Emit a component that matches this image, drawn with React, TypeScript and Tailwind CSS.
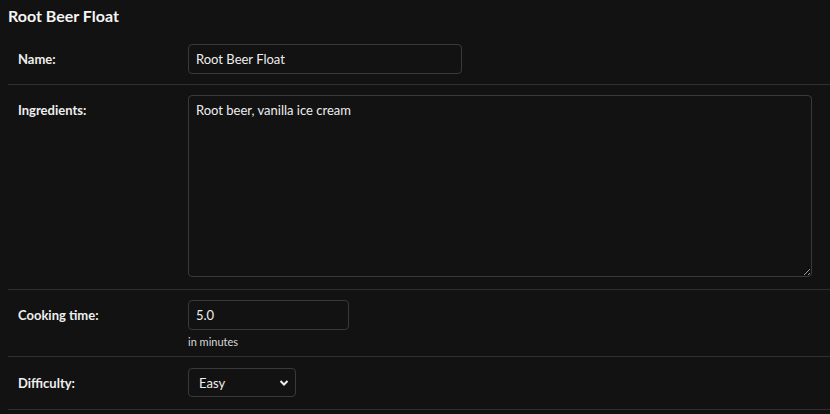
import React from 'react';

const font = { fontFamily: '"Segoe UI", Lato, "Noto Sans", sans-serif' };

export default function App() {
  return (
    <div className="min-h-[414px] w-[830px] bg-[#121212] text-[#eeeeee] overflow-hidden" style={font}>
      <h2 className="px-[8px] pt-[5px] pb-[7px] text-[16px] leading-[22px] font-bold text-[#f5f5f5]">Root Beer Float</h2>
      <div className="ml-[8px]">
        <div className="flex border-b border-[#2f2f2f] p-[10px] pr-0">
          <label className="w-[170px] shrink-0 pt-[6px] text-[13px] font-bold">Name:</label>
          <input
            defaultValue="Root Beer Float"
            className="h-[30px] w-[274px] rounded-[4px] border border-[#3a3a3a] bg-[#121212] px-[7px] text-[13px] text-[#eeeeee] outline-none"
          />
        </div>
        <div className="flex border-b border-[#2f2f2f] px-[10px] pt-[10px] pb-[12px] pr-0">
          <label className="w-[170px] shrink-0 pt-[6px] text-[13px] font-bold">Ingredients:</label>
          <textarea
            defaultValue="Root beer, vanilla ice cream"
            className="block h-[182px] w-[624px] rounded-[4px] border border-[#3a3a3a] bg-[#121212] px-[7px] py-[5px] text-[13px] text-[#eeeeee] outline-none"
          />
        </div>
        <div className="flex border-b border-[#2f2f2f] px-[10px] pt-[10px] pb-[6px] pr-0">
          <label className="w-[170px] shrink-0 pt-[6px] text-[13px] font-bold">Cooking time:</label>
          <div className="flex flex-col">
            <input
              defaultValue="5.0"
              className="h-[30px] w-[161px] rounded-[4px] border border-[#3a3a3a] bg-[#121212] px-[7px] text-[13px] text-[#eeeeee] outline-none"
            />
            <span className="mt-[3px] text-[11px] leading-[17px] text-[#d8d8d8]">in minutes</span>
          </div>
        </div>
        <div className="flex border-b border-[#2f2f2f] px-[10px] pt-[11px] pb-[12px] pr-0">
          <label className="w-[170px] shrink-0 pt-[6px] text-[13px] font-bold">Difficulty:</label>
          <div className="relative h-[29px] w-[108px] rounded-[4px] border border-[#3a3a3a] bg-[#121212]">
            <span className="absolute left-[10px] top-[5px] text-[13px]">Easy</span>
            <svg className="absolute right-[6px] top-[9px]" width="10" height="10" viewBox="0 0 10 10">
              <path d="M1.5 3 L5 6.5 L8.5 3" stroke="#eeeeee" strokeWidth="2" fill="none" />
            </svg>
          </div>
        </div>
      </div>
    </div>
  );
}
